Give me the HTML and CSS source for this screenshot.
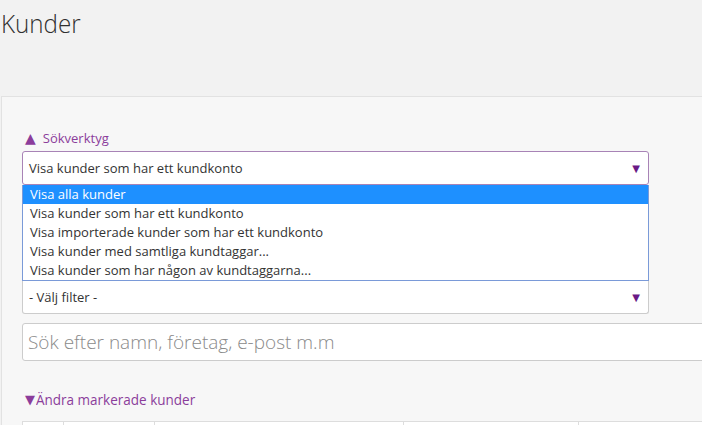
FILE: index.html
```html
<!DOCTYPE html>
<html lang="sv">
<head>
<meta charset="utf-8">
<title>Kunder</title>
<link rel="stylesheet" href="styles.css">
</head>
<body>
<h1 class="page-title"><span class="title-text">Kunder</span></h1>
<div class="panel">
  <div class="toggle toggle-open"><span class="tri">&#9650;</span>Sökverktyg</div>
  <div class="select-wrap">
    <div class="select select-active">
      <span>Visa kunder som har ett kundkonto</span>
      <span class="arrow">&#9660;</span>
    </div>
    <ul class="dropdown">
      <li class="selected">Visa alla kunder</li>
      <li>Visa kunder som har ett kundkonto</li>
      <li>Visa importerade kunder som har ett kundkonto</li>
      <li>Visa kunder med samtliga kundtaggar...</li>
      <li>Visa kunder som har någon av kundtaggarna...</li>
    </ul>
    <div class="select select-filter">
      <span>- Välj filter -</span>
      <span class="arrow">&#9660;</span>
    </div>
  </div>
  <div class="search">Sök efter namn, företag, e-post m.m</div>
  <div class="toggle toggle-closed"><span class="tri2">&#9660;</span><span class="cond">Ändra markerade kunder</span></div>
  <div class="table">
    <div class="cell c1"></div>
    <div class="cell c2"></div>
    <div class="cell c3"></div>
    <div class="cell c4"></div>
    <div class="cell c5"></div>
  </div>
</div>
</body>
</html>
```
FILE: styles.css
```css
html, body {
  margin: 0;
  padding: 0;
  overflow: hidden;
}
body {
  background: #f2f2f2;
  font-family: "Open Sans", "DejaVu Sans", sans-serif;
  color: #333;
  width: 702px;
  height: 425px;
}
.page-title {
  margin: 0;
  padding: 5px 0 0 1px;
  font-size: 26px;
  font-weight: 300;
  line-height: 36px;
  color: #2f2f2f;
  height: 91px;
}
.title-text {
  display: inline-block;
  transform: scaleX(0.93);
  transform-origin: left center;
}
.panel {
  margin-left: 1px;
  width: 760px;
  border: 1px solid #e2e2e2;
  background: #f7f7f7;
  padding: 32px 0 0 20px;
  height: 400px;
  box-sizing: border-box;
}
.toggle {
  color: #8b3d9b;
  font-size: 13px;
  line-height: 18px;
  display: flex;
  align-items: center;
}
.toggle-open {
  padding-left: 3px;
  height: 18px;
  margin-bottom: 4px;
}
.tri {
  font-size: 14px;
  margin-right: 7px;
  color: #8b3d9b;
}
.select-wrap {
  width: 627px;
}
.select {
  box-sizing: border-box;
  background: #fff;
  display: flex;
  align-items: center;
  justify-content: space-between;
  padding: 0 8px 0 6px;
  font-size: 13px;
  color: #333;
}
.select-active {
  height: 34px;
  border: 1px solid #a883b6;
  border-radius: 3px;
}
.select-filter {
  height: 33px;
  border: 1px solid #cccccc;
  border-top: none;
  border-radius: 0 0 3px 3px;
}
.arrow {
  color: #6a1a86;
  font-size: 10px;
}
.dropdown {
  list-style: none;
  margin: 0;
  padding: 0;
  border: 1px solid #7a9ad8;
  border-top: none;
  background: #fff;
}
.dropdown li {
  height: 19px;
  line-height: 19px;
  font-size: 13px;
  padding-left: 7px;
  color: #333;
}
.dropdown li.selected {
  background: #1e90ff;
  color: #fff;
}
.search {
  margin-top: 9px;
  height: 38px;
  box-sizing: border-box;
  border: 1px solid #cccccc;
  border-radius: 3px;
  background: #fff;
  font-size: 19px;
  font-weight: 300;
  color: #8a8a8a;
  line-height: 36px;
  padding-left: 5px;
}
.toggle-closed {
  margin-top: 29px;
  padding-left: 3px;
  height: 18px;
}
.tri2 {
  font-size: 13px;
  margin-right: 1px;
}
.cond {
  display: inline-block;
  font-size: 15px;
  transform: scaleX(0.9);
  transform-origin: left center;
}
.table {
  margin-top: 13px;
  display: flex;
  height: 30px;
  border-top: 1px solid #dddddd;
  border-left: 1px solid #dddddd;
  background: #fff;
}
.cell {
  flex-shrink: 0;
  border-right: 1px solid #dddddd;
  box-sizing: border-box;
}
.c1 { width: 41px; }
.c2 { width: 91px; }
.c3 { width: 249px; }
.c4 { width: 175px; }
.c5 { width: 200px; }
```
